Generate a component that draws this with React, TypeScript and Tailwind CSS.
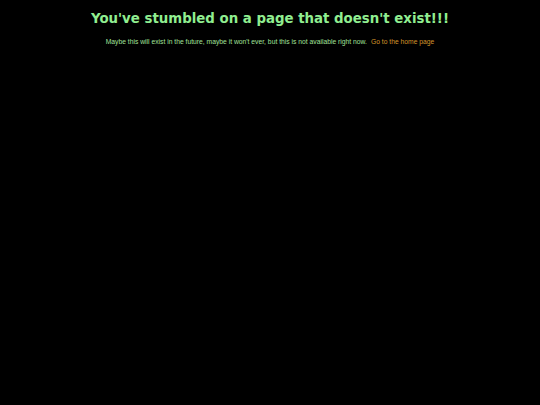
export default function App() {
  return (
    <div className="w-[540px] h-[405px] bg-black flex flex-col items-center">
      <h1 className="mt-[10px] text-[13.33px] leading-[17px] font-bold text-[#90ee90]" style={{ fontFamily: '"DejaVu Sans", sans-serif' }}>
        You've stumbled on a page that doesn't exist!!!
      </h1>
      <p className="mt-[10px] text-[6.75px] leading-[9px] text-[#a0e09a]" style={{ fontFamily: '"Liberation Sans", Arial, sans-serif' }}>
        Maybe this will exist in the future, maybe it won't ever, but this is not available right now.
        <a className="ml-[4px] text-[#d4952a]">Go to the home page</a>
      </p>
    </div>
  );
}
